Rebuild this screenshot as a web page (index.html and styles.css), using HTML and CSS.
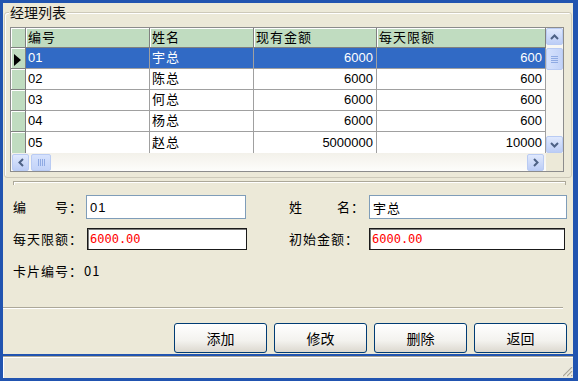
FILE: index.html
```html
<!DOCTYPE html>
<html>
<head>
    <title>经理列表</title>
    <link rel="stylesheet" href="styles.css">
</head>
<body>
    <div class="window">
        <div class="client">
            <div class="group">
                <span class="legend">经理列表</span>
                <div class="grid">
                    <div class="grid-main">
                        <table class="data">
                            <colgroup>
                                <col style="width:15px">
                                <col style="width:124px">
                                <col style="width:104px">
                                <col style="width:123px">
                                <col style="width:169px">
                            </colgroup>
                            <thead>
                                <tr>
                                    <th class="ind"></th>
                                    <th>编号</th>
                                    <th>姓名</th>
                                    <th>现有金额</th>
                                    <th>每天限额</th>
                                </tr>
                            </thead>
                            <tbody>
                                <tr class="selected">
                                    <td class="ind"><svg class="arrow" width="8" height="12" viewBox="0 0 8 12"><polygon points="0,0 7,6 0,12" fill="#000"/></svg></td>
                                    <td>01</td>
                                    <td class="cn">宇总</td>
                                    <td class="num">6000</td>
                                    <td class="num">600</td>
                                </tr>
                                <tr>
                                    <td class="ind"></td>
                                    <td>02</td>
                                    <td class="cn">陈总</td>
                                    <td class="num">6000</td>
                                    <td class="num">600</td>
                                </tr>
                                <tr>
                                    <td class="ind"></td>
                                    <td>03</td>
                                    <td class="cn">何总</td>
                                    <td class="num">6000</td>
                                    <td class="num">600</td>
                                </tr>
                                <tr>
                                    <td class="ind"></td>
                                    <td>04</td>
                                    <td class="cn">杨总</td>
                                    <td class="num">6000</td>
                                    <td class="num">600</td>
                                </tr>
                                <tr>
                                    <td class="ind"></td>
                                    <td>05</td>
                                    <td class="cn">赵总</td>
                                    <td class="num">5000000</td>
                                    <td class="num">10000</td>
                                </tr>
                            </tbody>
                        </table>
                        <div class="vscroll">
                            <div class="sb-btn">
                                <svg width="9" height="6" viewBox="0 0 9 6"><polyline points="1,5 4.5,1.5 8,5" fill="none" stroke="#4d6185" stroke-width="2"/></svg>
                            </div>
                            <div class="thumb-v">
                                <span></span><span></span><span></span><span></span>
                            </div>
                            <div class="sb-btn sb-end">
                                <svg width="9" height="6" viewBox="0 0 9 6"><polyline points="1,1 4.5,4.5 8,1" fill="none" stroke="#4d6185" stroke-width="2"/></svg>
                            </div>
                        </div>
                    </div>
                    <div class="grid-foot">
                        <div class="hscroll">
                            <div class="sb-btn">
                                <svg width="6" height="9" viewBox="0 0 6 9"><polyline points="5,1 1.5,4.5 5,8" fill="none" stroke="#4d6185" stroke-width="2"/></svg>
                            </div>
                            <div class="thumb-h">
                                <span></span><span></span><span></span><span></span>
                            </div>
                            <div class="sb-btn sb-end">
                                <svg width="6" height="9" viewBox="0 0 6 9"><polyline points="1,1 4.5,4.5 1,8" fill="none" stroke="#4d6185" stroke-width="2"/></svg>
                            </div>
                        </div>
                        <div class="corner"></div>
                    </div>
                </div>
            </div>

            <div class="frame-top"></div>

            <div class="form">
                <div class="fields">
                    <div class="field">
                        <label class="lbl"><span>编</span><span>号：</span></label>
                        <input type="text" class="txt" value="01">
                    </div>
                    <div class="field">
                        <label class="lbl lbl-r"><span>姓</span><span>名：</span></label>
                        <input type="text" class="txt txt-r" value="宇总">
                    </div>
                    <div class="field">
                        <label class="lbl"><span>每天限额：</span></label>
                        <input type="text" class="txt money" value="6000.00">
                    </div>
                    <div class="field">
                        <label class="lbl lbl-r"><span>初始金额：</span></label>
                        <input type="text" class="txt money txt-r2" value="6000.00">
                    </div>
                </div>
                <div class="card">
                    <span class="card-label">卡片编号：</span><span>01</span>
                </div>
            </div>

            <div class="frame-bottom"></div>

            <div class="buttons">
                <button type="button">添加</button>
                <button type="button">修改</button>
                <button type="button">删除</button>
                <button type="button">返回</button>
            </div>
        </div>
        <div class="statusbar">
            <svg class="grip" width="12" height="12" viewBox="0 0 12 12">
                <line x1="11" y1="1" x2="1" y2="11" stroke="#fff" stroke-width="1"/>
                <line x1="11" y1="2" x2="2" y2="11" stroke="#aca899" stroke-width="1.2"/>
                <line x1="11" y1="5" x2="5" y2="11" stroke="#fff" stroke-width="1"/>
                <line x1="11" y1="6" x2="6" y2="11" stroke="#aca899" stroke-width="1.2"/>
                <line x1="11" y1="9" x2="9" y2="11" stroke="#fff" stroke-width="1"/>
                <line x1="11" y1="10" x2="10" y2="11" stroke="#aca899" stroke-width="1.2"/>
            </svg>
        </div>
    </div>
</body>
</html>
```

FILE: styles.css
```css
body {
    margin: 0;
    font-family: "Liberation Sans", "Noto Sans CJK SC", sans-serif;
}
.window {
    width: 578px;
    height: 381px;
    box-sizing: border-box;
    border: 3px solid #2154b0;
    border-right-width: 5px;
    background-color: #ece9d8;
    display: flex;
    flex-direction: column;
}
.client {
    height: 351px;
    border-bottom: 2px solid #2154b0;
}
.statusbar {
    flex: 1;
    border-top: 1px solid #aca899;
    box-shadow: inset 1px 1px 0 #fff;
    background-color: #ebe8db;
    display: flex;
    justify-content: flex-end;
    align-items: flex-end;
}
.grip {
    margin: 0 0 1px 0;
}

/* list group */
.group {
    position: relative;
    margin: 9px 0 0 1px;
    width: 568px;
    height: 166px;
    box-sizing: border-box;
    border: 1px solid #cdc9b9;
    border-radius: 3px;
    box-shadow: inset 1px 1px 0 #fff;
    padding: 14px 0 0 5px;
}
.legend {
    position: absolute;
    top: -9px;
    left: 4px;
    padding: 0 1px;
    background-color: #ece9d8;
    font-family: "Noto Sans CJK SC", sans-serif;
    font-size: 14px;
    line-height: 16px;
    color: #111;
}
.grid {
    width: 554px;
    box-sizing: border-box;
    border: 1px solid #8c8c8c;
    background-color: #ece9d8;
}
.grid-main {
    display: flex;
}
.data {
    width: 535px;
    table-layout: fixed;
    border-collapse: separate;
    border-spacing: 0;
    font-size: 13px;
    background-color: #fff;
}
.data th {
    background-color: #c0dcc0;
    font-weight: normal;
    text-align: left;
    line-height: 19px;
    padding: 0 0 0 2px;
    border-right: 1px solid #808080;
    border-bottom: 1px solid #808080;
    box-shadow: inset 1px 1px 0 #fff;
    letter-spacing: 1px;
    white-space: nowrap;
    overflow: hidden;
}
.data td {
    line-height: 20px;
    padding: 0 3px 0 2px;
    border-right: 1px solid #a0a0a0;
    border-bottom: 1px solid #a0a0a0;
    white-space: nowrap;
    overflow: hidden;
}
.data .ind {
    padding: 0;
    background-color: #c0dcc0;
    border-right: 1px solid #808080;
    border-bottom: 1px solid #808080;
    box-shadow: inset 1px 1px 0 #fff;
}
.data .cn {
    letter-spacing: 1px;
}
.data .num {
    text-align: right;
}
.data tr:last-child td {
    border-bottom: none;
    line-height: 21px;
}
.selected td {
    background-color: #316ac5;
    color: #fff;
}
.selected td.ind {
    background-color: #c0dcc0;
}
.arrow {
    display: block;
    margin: 4px 0 0 3px;
}

/* scrollbars */
.vscroll {
    width: 17px;
    background-color: #f8f7f3;
    display: flex;
    flex-direction: column;
}
.sb-btn {
    width: 17px;
    height: 17px;
    box-sizing: border-box;
    border: 1px solid #b9cbf3;
    border-radius: 2px;
    background: linear-gradient(#e0e9fd, #bccdf6);
    display: flex;
    align-items: center;
    justify-content: center;
}
.sb-end {
    margin-top: auto;
}
.thumb-v {
    margin-top: 3px;
    height: 22px;
    box-sizing: border-box;
    border: 1px solid #b9cbf3;
    border-radius: 2px;
    background: linear-gradient(to right, #d6e2fd, #c3d3f8);
    display: flex;
    flex-direction: column;
    align-items: center;
    justify-content: center;
    gap: 1px;
}
.thumb-v span {
    width: 7px;
    height: 1px;
    background-color: #8faae3;
}
.grid-foot {
    display: flex;
    height: 18px;
}
.hscroll {
    width: 535px;
    background: linear-gradient(#f3f1ea, #fdfdfb);
    display: flex;
    align-items: center;
    padding: 0 0 0 1px;
    box-sizing: border-box;
}
.hscroll .sb-end {
    margin: 0 2px 0 auto;
}
.thumb-h {
    margin-left: 2px;
    width: 20px;
    height: 17px;
    box-sizing: border-box;
    border: 1px solid #b9cbf3;
    border-radius: 2px;
    background: linear-gradient(#d6e2fd, #c3d3f8);
    display: flex;
    align-items: center;
    justify-content: center;
    gap: 1px;
}
.thumb-h span {
    width: 1px;
    height: 7px;
    background-color: #8faae3;
}
.corner {
    flex: 1;
    background-color: #ece9d8;
}

/* detail form */
.frame-top {
    margin: 3px 0 0 10px;
    width: 551px;
    height: 3px;
    border: 1px solid #aca899;
    border-bottom: none;
    box-shadow: inset 1px 1px 0 #fff;
}
.form {
    padding: 10px 0 0 10px;
    font-family: "Noto Sans CJK SC", sans-serif;
    font-size: 13px;
    letter-spacing: 1px;
    color: #000;
}
.fields {
    display: grid;
    grid-template-columns: 276px auto;
    grid-template-rows: 24px 22px;
    row-gap: 9px;
}
.field {
    display: flex;
    align-items: center;
}
.lbl {
    width: 73px;
    padding-right: 3px;
    box-sizing: border-box;
    display: flex;
    justify-content: space-between;
    line-height: 16px;
}
.lbl-r {
    width: 80px;
    padding-right: 4px;
}
.txt {
    width: 160px;
    height: 100%;
    box-sizing: border-box;
    margin: 0;
    border: 1px solid #7f9db9;
    padding: 0 0 0 3px;
    background-color: #fff;
    font-family: "Liberation Sans", "Noto Sans CJK SC", sans-serif;
    font-size: 13px;
    letter-spacing: 1px;
    color: #000;
    outline: none;
}
.txt-r {
    width: 198px;
}
.money {
    border: 1px solid #1a1a1a;
    box-shadow: inset 1px 1px 0 #7a7a7a;
    padding-left: 2px;
    font-family: "DejaVu Sans Mono", "Liberation Mono", monospace;
    font-size: 12px;
    letter-spacing: 0;
    color: #ff0000;
    margin-left: 1px;
}
.txt-r2 {
    width: 196px;
    margin-left: 0;
}
.card {
    margin-top: 13px;
    line-height: 16px;
}
.card-label {
    margin-right: 1px;
}

.frame-bottom {
    margin-top: 28px;
    width: 560px;
    border-top: 1px solid #aca899;
    border-bottom: 1px solid #fff;
}
.buttons {
    display: flex;
    gap: 7px;
    margin: 14px 0 0 171px;
}
.buttons button {
    width: 93px;
    height: 30px;
    border: 1px solid #003c74;
    border-radius: 3px;
    background: linear-gradient(#ffffff, #f3f2ee 60%, #dcd8cf);
    font-family: "Noto Sans CJK SC", sans-serif;
    font-size: 14px;
    color: #000;
    padding: 0;
}
```
